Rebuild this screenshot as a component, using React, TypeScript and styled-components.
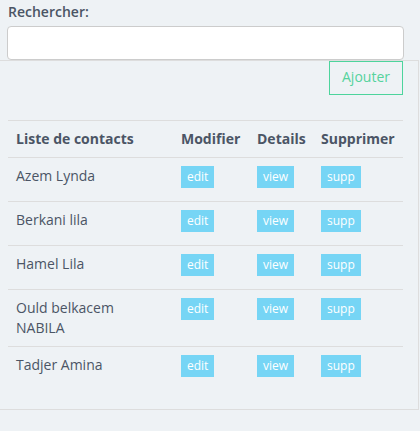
import styled, { createGlobalStyle } from 'styled-components';

const GlobalStyle = createGlobalStyle`
  body {
    margin: 0;
    background-color: #eef2f5;
    font-family: 'Open Sans', 'Liberation Sans', sans-serif;
    font-size: 14px;
    line-height: 20px;
    color: #4b5565;
  }
`;

const contacts = [
  'Azem Lynda',
  'Berkani lila',
  'Hamel Lila',
  'Ould belkacem NABILA',
  'Tadjer Amina',
];

const App = () => {
  return (
    <>
      <GlobalStyle />
      <SearchSection>
        <SearchLabel htmlFor="search">Rechercher:</SearchLabel>
        <SearchInput id="search" type="text" />
      </SearchSection>
      <Panel>
        <Toolbar>
          <AddButton>Ajouter</AddButton>
        </Toolbar>
        <ContactTable>
          <colgroup>
            <col style={{ width: 165 }} />
            <col style={{ width: 76 }} />
            <col style={{ width: 64 }} />
            <col style={{ width: 90 }} />
          </colgroup>
          <thead>
            <tr>
              <HeadCell>Liste de contacts</HeadCell>
              <HeadCell>Modifier</HeadCell>
              <HeadCell>Details</HeadCell>
              <HeadCell>Supprimer</HeadCell>
            </tr>
          </thead>
          <tbody>
            {contacts.map((name) => (
              <tr key={name}>
                <NameCell>{name}</NameCell>
                <Cell>
                  <ActionButton>edit</ActionButton>
                </Cell>
                <Cell>
                  <ActionButton>view</ActionButton>
                </Cell>
                <Cell>
                  <ActionButton>supp</ActionButton>
                </Cell>
              </tr>
            ))}
          </tbody>
        </ContactTable>
      </Panel>
    </>
  );
};

export default App;

const SearchSection = styled.div`
  padding: 2px 0 0 7px;
  width: 397px;
`;

const SearchLabel = styled.label`
  display: block;
  font-weight: 600;
  padding-left: 1px;
  margin-bottom: 4px;
`;

const SearchInput = styled.input`
  display: block;
  box-sizing: border-box;
  width: 397px;
  height: 34px;
  margin: 0;
  border: 1px solid #cccccc;
  border-radius: 4px;
  background-color: #fff;
  outline: none;
`;

const Panel = styled.div`
  box-sizing: border-box;
  width: 419px;
  border: 1px solid #dddddd;
  border-left: none;
  padding: 0 15px 19px 8px;
`;

const Toolbar = styled.div`
  display: flex;
  justify-content: flex-end;
  margin-bottom: 25px;
`;

const AddButton = styled.button`
  box-sizing: border-box;
  height: 34px;
  width: 74px;
  border: 1px solid #4dd49c;
  background: transparent;
  color: #55d39d;
  font-family: 'Open Sans', 'Liberation Sans', sans-serif;
  font-size: 14px;
  line-height: 20px;
  padding: 0 0 2px;
`;

const ContactTable = styled.table`
  width: 395px;
  border-collapse: collapse;
  table-layout: fixed;
`;

const HeadCell = styled.th`
  text-align: left;
  font-weight: 700;
  padding: 8px;
  border-top: 1px solid #dddddd;
  vertical-align: top;
  white-space: nowrap;
`;

const Cell = styled.td`
  padding: 8px;
  border-top: 1px solid #dddddd;
  vertical-align: top;
`;

const NameCell = styled(Cell)`
  padding-right: 20px;
`;

const ActionButton = styled.span`
  display: inline-block;
  vertical-align: top;
  height: 22px;
  line-height: 22px;
  padding: 0 6px;
  margin-bottom: 5px;
  background-color: #76d5f5;
  color: #fff;
  font-size: 12px;
`;
